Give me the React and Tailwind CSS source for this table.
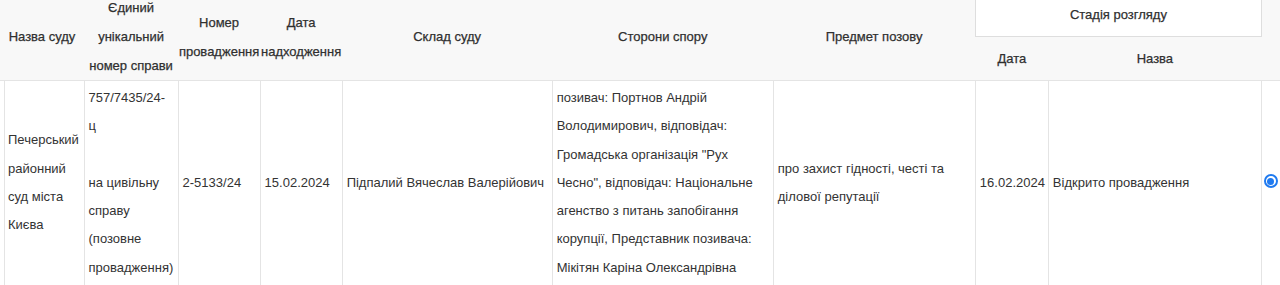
const COLS = [84, 94, 82, 82, 210, 221, 202, 73, 213, 40]

const HEAD = [
  'Назва суду',
  'Єдиний унікальний номер справи',
  'Номер провадження',
  'Дата надходження',
  'Склад суду',
  'Сторони спору',
  'Предмет позову',
]

const ROW = {
  court: 'Печерський районний суд міста Києва',
  caseNo: '757/7435/24-ц',
  caseKind: 'на цивільну справу (позовне провадження)',
  procNo: '2-5133/24',
  received: '15.02.2024',
  judge: 'Підпалий Вячеслав Валерійович',
  parties:
    'позивач: Портнов Андрій Володимирович, відповідач: Громадська організація "Рух Чесно", відповідач: Національне агенство з питань запобігання корупції, Представник позивача: Мікітян Каріна Олександрівна',
  subject: 'про захист гідності, честі та ділової репутації',
  stageDate: '16.02.2024',
  stageName: 'Відкрито провадження',
}

export default function App() {
  const td = 'border border-[#e4e4e4] px-1 py-[3px] align-middle text-left'
  const th = 'px-0 py-0 font-normal text-center align-middle leading-[29px] [-webkit-text-stroke:0.25px_#333]'
  return (
    <div className="w-[1280px] h-[285px] overflow-hidden bg-white font-['Liberation_Sans',Arial,sans-serif] text-[13px] text-[#333]">
      <table className="table-fixed border-collapse w-[1302px] -mt-[7px]">
        <colgroup>
          {COLS.map((w, i) => (
            <col key={i} style={{ width: w }} />
          ))}
        </colgroup>
        <thead className="bg-[#f8f8f8] text-[#2e2e2e]">
          <tr className="h-[43px]">
            {HEAD.map(h => (
              <th key={h} rowSpan={2} className={th}>
                {h}
              </th>
            ))}
            <th colSpan={2} className={`${th} bg-white border border-[#dedede] border-t-0`}>
              Стадія розгляду
            </th>
            <th rowSpan={2} />
          </tr>
          <tr className="h-[43px] border-b border-[#e4e4e4]">
            <th className={th}>Дата</th>
            <th className={th}>Назва</th>
          </tr>
        </thead>
        <tbody className="leading-[28.3px]">
          <tr>
            <td className={`${td} border-l-0 pl-2 shadow-[inset_4px_0_0_#fff,inset_5px_0_0_#e4e4e4]`}>{ROW.court}</td>
            <td className={`${td} pr-2`}>
              {ROW.caseNo}
              <br />
              <br />
              {ROW.caseKind}
            </td>
            <td className={td}>{ROW.procNo}</td>
            <td className={td}>{ROW.received}</td>
            <td className={td}>{ROW.judge}</td>
            <td className={td}>{ROW.parties}</td>
            <td className={td}>{ROW.subject}</td>
            <td className={td}>{ROW.stageDate}</td>
            <td className={td}>{ROW.stageName}</td>
            <td className={`${td} pl-[2px]`}>
              <span className="flex items-center justify-center w-[14px] h-[14px] -mt-[4px] rounded-full border-2 border-[#1f7af0] bg-white">
                <span className="w-[7px] h-[7px] rounded-full bg-[#1f7af0]" />
              </span>
            </td>
          </tr>
        </tbody>
      </table>
    </div>
  )
}
